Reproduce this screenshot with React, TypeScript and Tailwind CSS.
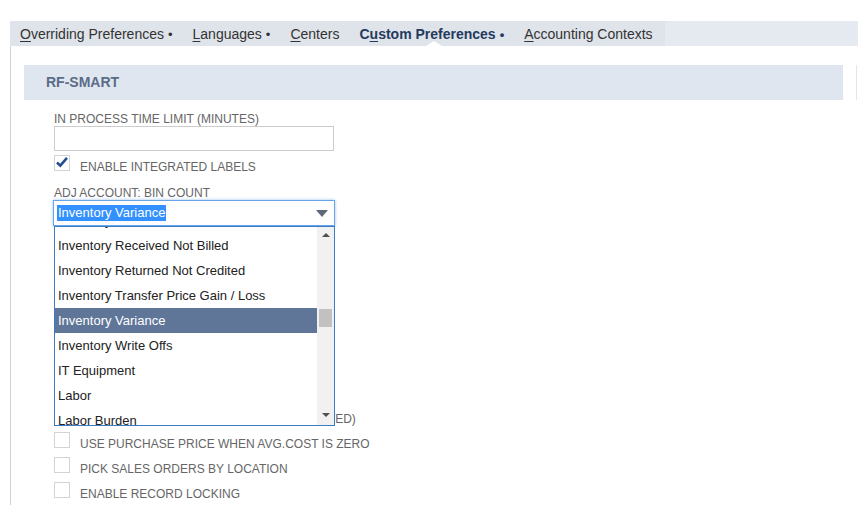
import React from "react";

const tabs = [
  { label: "Overriding Preferences", key: 0, dot: true },
  { label: "Languages", key: 0, dot: true },
  { label: "Centers", key: 0, dot: false },
  { label: "Custom Preferences", key: 1, dot: true, active: true },
  { label: "Accounting Contexts", key: 0, dot: false },
];

const accounts = [
  "Inventory In Transit",
  "Inventory Received Not Billed",
  "Inventory Returned Not Credited",
  "Inventory Transfer Price Gain / Loss",
  "Inventory Variance",
  "Inventory Write Offs",
  "IT Equipment",
  "Labor",
  "Labor Burden",
];

const Tab = ({ label, keyIndex, dot, active }: { label: string; keyIndex: number; dot: boolean; active?: boolean }) => (
  <div
    className={`relative flex h-full items-center px-[10px] pt-[2px] text-[14px] ${
      active ? "font-bold text-[#253a5e]" : "text-[#333]"
    }`}
  >
    <span>
      {label.slice(0, keyIndex)}
      <span className="underline underline-offset-2">{label[keyIndex]}</span>
      {label.slice(keyIndex + 1)}
      {dot && <span className="ml-[4px] text-[13px]">•</span>}
    </span>
    {active && (
      <span className="absolute bottom-0 left-1/2 -translate-x-[6px] h-0 w-0 border-x-[8px] border-b-[5px] border-x-transparent border-b-white" />
    )}
  </div>
);

const Checkbox = ({ label, checked }: { label: string; checked?: boolean }) => (
  <div className="flex h-[25px] items-start">
    <div className="relative h-[16px] w-[16px] shrink-0 border border-[#d3d3d3] bg-white">
      {checked && (
        <svg viewBox="0 0 16 16" className="absolute -left-[1px] -top-[2px] h-[16px] w-[16px]">
          <path d="M3 8.5 L6.3 11.6 L13 3.8" fill="none" stroke="#24508f" strokeWidth="2.6" />
        </svg>
      )}
    </div>
    <span className="ml-[10px] mt-[5px] whitespace-nowrap text-[12px] leading-[14px] text-[#666] uppercase">{label}</span>
  </div>
);

const Label = ({ children }: { children: React.ReactNode }) => (
  <div className="text-[12px] leading-[14px] text-[#666] uppercase">{children}</div>
);

export default function App() {
  return (
    <div className="h-[505px] w-[858px] overflow-hidden bg-white font-['Liberation_Sans',Arial,sans-serif]">
      <div className="h-[21px]" />
      <div className="ml-[10px] flex h-[25px] bg-[#e5e9f0]">
        <div className="flex h-full bg-[#dfe3ea] pr-[2px]">
          {tabs.map((t) => (
            <Tab key={t.label} label={t.label} keyIndex={t.key} dot={t.dot} active={t.active} />
          ))}
        </div>
      </div>

      <div className="ml-[10px] h-[459px] border-l border-[#d2d2d2] pt-[19px]">
        <div className="flex">
          <div className="ml-[13px] flex h-[35px] w-[819px] items-center bg-[#e0e6ef] pl-[22px] text-[14px] font-bold text-[#5b6c87]">
            RF-SMART
          </div>
          <div className="ml-[13px] h-[35px] w-px bg-[#e6e6e6]" />
        </div>

        <div className="pl-[43px] pt-[12px]">
          <Label>In Process Time Limit (Minutes)</Label>
          <div className="h-[25px] w-[280px] border border-[#cccccc]" />
          <div className="mt-[4px]">
            <Checkbox label="Enable Integrated Labels" checked />
          </div>
          <div className="mt-[6px]">
            <Label>Adj Account: Bin Count</Label>
          </div>

          <div className="relative -ml-px w-[282px]">
            <div className="flex h-[26px] items-center border border-[#6aa4e8] pl-[3px] pr-[6px] shadow-[0_0_3px_#9cc3f0]">
              <span className="bg-[#3390ff] px-px text-[13px] leading-[16px] text-white">Inventory Variance</span>
              <svg viewBox="0 0 12 7" className="ml-auto h-[7px] w-[12px]">
                <path d="M0 0 H12 L6 7 Z" fill="#5e6878" />
              </svg>
            </div>

            <div className="absolute left-px top-[26px] z-10 flex h-[200px] w-[281px] overflow-hidden border border-[#3a7cc6] bg-white">
              <div className="flex-1 overflow-hidden">
                <div className="-mt-[19px]">
                  {accounts.map((a) => (
                    <div
                      key={a}
                      className={`flex h-[25px] items-center pl-[3px] text-[13px] ${
                        a === "Inventory Variance" ? "bg-[#607699] text-white" : "text-[#222]"
                      }`}
                    >
                      {a}
                    </div>
                  ))}
                </div>
              </div>
              <div className="flex w-[17px] flex-col items-center bg-[#f1f1f1]">
                <svg viewBox="0 0 8 4" className="mt-[6px] h-[4px] w-[8px]">
                  <path d="M0 4 H8 L4 0 Z" fill="#505050" />
                </svg>
                <div className="mt-[72px] h-[18px] w-[13px] bg-[#c1c1c1]" />
                <svg viewBox="0 0 8 4" className="mb-[8px] mt-auto h-[4px] w-[8px]">
                  <path d="M0 0 H8 L4 4 Z" fill="#505050" />
                </svg>
              </div>
            </div>
          </div>

          <div className="mt-[6px]">
            <Checkbox label="Use Bins" />
            <Checkbox label="Pick By Zone" />
            <Checkbox label="Allow Overpicking" />
            <Checkbox label="Default Lot Numbers" />
            <Checkbox label="Print Item Labels" />
            <Checkbox label="Enable Cartonization" />
            <Checkbox label="Show Item Images" />
            <Checkbox label="Count All Bins At Item Cost (If Estimated)" />
            <Checkbox label="Use Purchase Price When Avg.Cost Is Zero" />
            <Checkbox label="Pick Sales Orders By Location" />
            <Checkbox label="Enable Record Locking" />
          </div>
        </div>
      </div>
    </div>
  );
}
